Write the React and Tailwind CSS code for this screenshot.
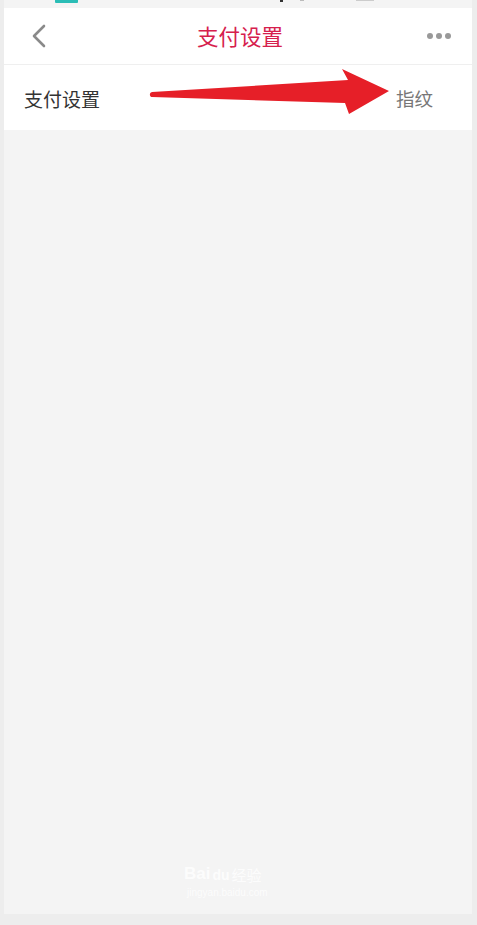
import React from "react";

export default function App() {
  const font = { fontFamily: '"Noto Sans CJK SC", "Noto Sans", sans-serif' };
  return (
    <div className="w-[477px] h-[925px] bg-[#ededed] flex flex-col overflow-hidden" style={font}>
      <div className="mx-[4px] mr-[5px] h-[914px] bg-[#f4f4f4] flex flex-col relative">
        <div className="h-[8px] relative">
          <div className="absolute left-[51px] top-0 w-[23px] h-[3px] bg-[#2bbdb6] rounded-b-[1px]" />
          <div className="absolute left-[276px] top-0 w-[3px] h-[2px] bg-[#333]" />
          <div className="absolute left-[296px] top-0 w-[4px] h-[1px] bg-[#bbb]" />
          <div className="absolute left-[352px] top-0 w-[18px] h-[1px] bg-[#ccc]" />
        </div>
        <div className="bg-white">
          <div className="h-[57px] flex items-center justify-between px-[26px] border-b border-[#efefef]">
            <svg width="16" height="24" viewBox="0 0 16 24" className="ml-[1px]">
              <path d="M13 2 L3 12 L13 22" fill="none" stroke="#8a8a8a" strokeWidth="2.6" strokeLinecap="round" strokeLinejoin="round" />
            </svg>
            <div className="text-[21.5px] leading-none text-[#d6204d] ml-[6px]">支付设置</div>
            <div className="flex gap-[3px] mr-[-5px]">
              <span className="w-[6px] h-[6px] rounded-full bg-[#999]" />
              <span className="w-[6px] h-[6px] rounded-full bg-[#999]" />
              <span className="w-[6px] h-[6px] rounded-full bg-[#999]" />
            </div>
          </div>
          <div className="h-[65px] flex items-center justify-between pl-[20px] pr-[39px] relative">
            <div className="text-[19px] leading-none text-[#333] mt-[1px]">支付设置</div>
            <div className="text-[18.5px] leading-none text-[#777] mt-[1px]">指纹</div>
            <svg className="absolute left-[-4px] top-[-65px]" width="477" height="130" viewBox="0 0 477 130">
              <polygon points="152,92 348,80 342,69 389,91 349,114 345,103 152,97" fill="#e61f28" />
              <circle cx="152.5" cy="94.5" r="2.6" fill="#e61f28" />
            </svg>
          </div>
        </div>
        <div className="flex-1" />
        <div className="absolute left-[180px] top-[865px] flex items-end gap-[2px] text-white opacity-80" style={{ fontFamily: '"Liberation Sans", sans-serif' }}>
          <span className="text-[17px] font-bold leading-none">Bai</span>
          <span className="text-[14px] font-bold leading-none">du</span>
          <span className="text-[15px] leading-none" style={font}>经验</span>
        </div>
        <div className="absolute left-[183px] top-[885px] text-[10px] text-white opacity-80" style={{ fontFamily: '"Liberation Sans", sans-serif' }}>jingyan.baidu.com</div>
      </div>
    </div>
  );
}
